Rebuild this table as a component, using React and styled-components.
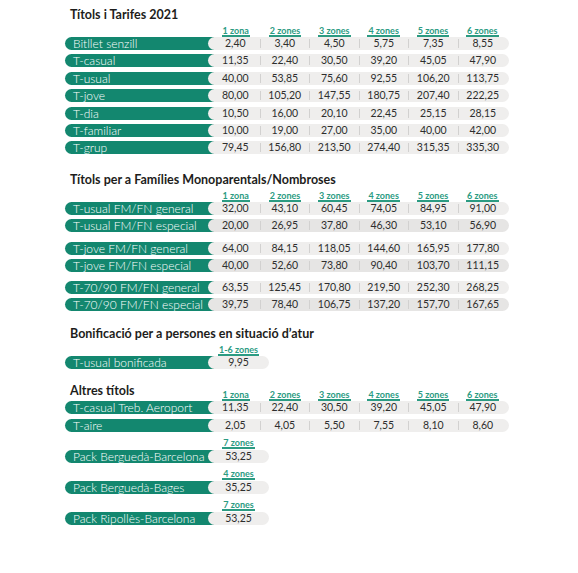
import styled, { createGlobalStyle } from "styled-components";

const GlobalStyle = createGlobalStyle`
    html, body {
        margin: 0;
        padding: 0;
        background: #ffffff;
    }
    body {
        font-family: Lato, "Open Sans", sans-serif;
        color: #333333;
    }
`;

const ZONES = ["1 zona", "2 zones", "3 zones", "4 zones", "5 zones", "6 zones"];

const tarifes = [
    ["Bitllet senzill", ["2,40", "3,40", "4,50", "5,75", "7,35", "8,55"]],
    ["T-casual", ["11,35", "22,40", "30,50", "39,20", "45,05", "47,90"]],
    ["T-usual", ["40,00", "53,85", "75,60", "92,55", "106,20", "113,75"]],
    ["T-jove", ["80,00", "105,20", "147,55", "180,75", "207,40", "222,25"]],
    ["T-dia", ["10,50", "16,00", "20,10", "22,45", "25,15", "28,15"]],
    ["T-familiar", ["10,00", "19,00", "27,00", "35,00", "40,00", "42,00"]],
    ["T-grup", ["79,45", "156,80", "213,50", "274,40", "315,35", "335,30"]],
];

const families = [
    [
        ["T-usual FM/FN general", ["32,00", "43,10", "60,45", "74,05", "84,95", "91,00"]],
        ["T-usual FM/FN especial", ["20,00", "26,95", "37,80", "46,30", "53,10", "56,90"]],
    ],
    [
        ["T-jove FM/FN general", ["64,00", "84,15", "118,05", "144,60", "165,95", "177,80"]],
        ["T-jove FM/FN especial", ["40,00", "52,60", "73,80", "90,40", "103,70", "111,15"]],
    ],
    [
        ["T-70/90 FM/FN general", ["63,55", "125,45", "170,80", "219,50", "252,30", "268,25"]],
        ["T-70/90 FM/FN especial", ["39,75", "78,40", "106,75", "137,20", "157,70", "167,65"]],
    ],
];

const altres = [
    ["T-casual Treb. Aeroport", ["11,35", "22,40", "30,50", "39,20", "45,05", "47,90"]],
    ["T-aire", ["2,05", "4,05", "5,50", "7,55", "8,10", "8,60"]],
];

const packs = [
    ["7 zones", "Pack Berguedà-Barcelona", "53,25"],
    ["4 zones", "Pack Berguedà-Bages", "35,25"],
    ["7 zones", "Pack Ripollès-Barcelona", "53,25"],
];

const PriceRow = ({ label, values, dark }) => (
    <Row>
        <Label>{label}</Label>
        <Values $dark={dark} $single={values.length === 1}>
            {values.map((v, i) => (
                <Cell key={i} $first={i === 0}>{v}</Cell>
            ))}
        </Values>
    </Row>
);

const HeaderRow = ({ zones, title, gap }) => (
    <Header $gap={gap}>
        <HeaderTitle>{title}</HeaderTitle>
        <HeaderCells $single={zones.length === 1}>
            {zones.map((z) => (
                <ZoneCell key={z}>
                    <Zone>{z}</Zone>
                </ZoneCell>
            ))}
        </HeaderCells>
    </Header>
);

const App = () => {
    return (
        <Page>
            <GlobalStyle />

            <Section>
                <Title>Títols i Tarifes 2021</Title>
                <HeaderRow zones={ZONES} />
                <Rows>
                    {tarifes.map(([label, values]) => (
                        <PriceRow key={label} label={label} values={values} />
                    ))}
                </Rows>
            </Section>

            <Section $top={18}>
                <Title>Títols per a Famílies Monoparentals/Nombroses</Title>
                <HeaderRow zones={ZONES} />
                {families.map((group, gi) => (
                    <Group key={gi} $first={gi === 0}>
                        {group.map(([label, values], ri) => (
                            <PriceRow key={label} label={label} values={values} dark={ri === 1} />
                        ))}
                    </Group>
                ))}
            </Section>

            <Section $top={15}>
                <Title>Bonificació per a persones en situació d’atur</Title>
                <HeaderRow zones={["1-6 zones"]} />
                <PriceRow label="T-usual bonificada" values={["9,95"]} />
            </Section>

            <Section $top={21}>
                <HeaderRow zones={ZONES} title="Altres títols" />
                <Rows>
                    {altres.map(([label, values]) => (
                        <PriceRow key={label} label={label} values={values} />
                    ))}
                </Rows>
                {packs.map(([zone, label, value], i) => (
                    <Pack key={i}>
                        <HeaderRow zones={[zone]} gap={1} />
                        <PriceRow label={label} values={[value]} />
                    </Pack>
                ))}
            </Section>
        </Page>
    );
};

export default App;

const Page = styled.div`
    width: 578px;
    min-height: 573px;
    box-sizing: border-box;
    padding: 7px 0 0 65px;
`;

const Section = styled.section`
    display: flex;
    flex-direction: column;
    margin-top: ${props => props.$top || 0}px;
`;

const Title = styled.h2`
    margin: 0 0 3px 5px;
    font-size: 12.5px;
    line-height: 16px;
    font-weight: 700;
    color: #1d1d1b;
`;

const Header = styled.div`
    display: flex;
    align-items: flex-end;
    height: 11px;
    margin-bottom: ${props => props.$gap || 0}px;
`;

const HeaderTitle = styled.div`
    width: 143px;
    padding-left: 5px;
    box-sizing: border-box;
    font-size: 12.5px;
    line-height: 16px;
    font-weight: 700;
    color: #1d1d1b;
    align-self: flex-end;
    margin-bottom: 2px;
    white-space: nowrap;
`;

const HeaderCells = styled.div`
    display: flex;
    width: ${props => props.$single ? 61 : 301}px;
    padding: ${props => props.$single ? "0" : "0 2px 0 3px"};
    box-sizing: border-box;
`;

const ZoneCell = styled.div`
    flex: 1;
    display: flex;
    justify-content: center;
`;

const Zone = styled.span`
    display: block;
    font-size: 9px;
    line-height: 9px;
    font-weight: 700;
    color: #2b9b82;
    padding: 0 1px;
    border-bottom: 2px solid #2b9b82;
    white-space: nowrap;
`;

const Rows = styled.div`
    display: flex;
    flex-direction: column;
    gap: 4.4px;
`;

const Group = styled.div`
    display: flex;
    flex-direction: column;
    gap: 4px;
    margin-top: ${props => props.$first ? 0 : 9.5}px;
`;

const Pack = styled.div`
    display: flex;
    flex-direction: column;
    margin-top: 6px;
`;

const Row = styled.div`
    display: flex;
    align-items: stretch;
    height: 13px;
`;

const Label = styled.div`
    width: 150px;
    flex-shrink: 0;
    box-sizing: border-box;
    padding-left: 8px;
    background: #13876f;
    border-radius: 7px 0 0 7px;
    color: #ffffff;
    font-size: 12px;
    font-weight: 300;
    line-height: 14px;
    white-space: nowrap;
    overflow: hidden;
`;

const Values = styled.div`
    display: flex;
    align-items: center;
    width: ${props => props.$single ? 61 : 301}px;
    margin-left: -7px;
    padding: ${props => props.$single ? "0" : "0 2px 0 3px"};
    box-sizing: border-box;
    background: ${props => props.$dark ? "#e6e5e4" : "#efeeed"};
    border-radius: 6.5px;
    position: relative;
`;

const Cell = styled.div`
    flex: 1;
    text-align: center;
    font-size: 10.5px;
    line-height: 13px;
    color: #2e2e2e;
    border-left: ${props => props.$first ? "none" : "1px solid #d2d1d0"};
    height: 9px;
    display: flex;
    align-items: center;
    justify-content: center;
`;
